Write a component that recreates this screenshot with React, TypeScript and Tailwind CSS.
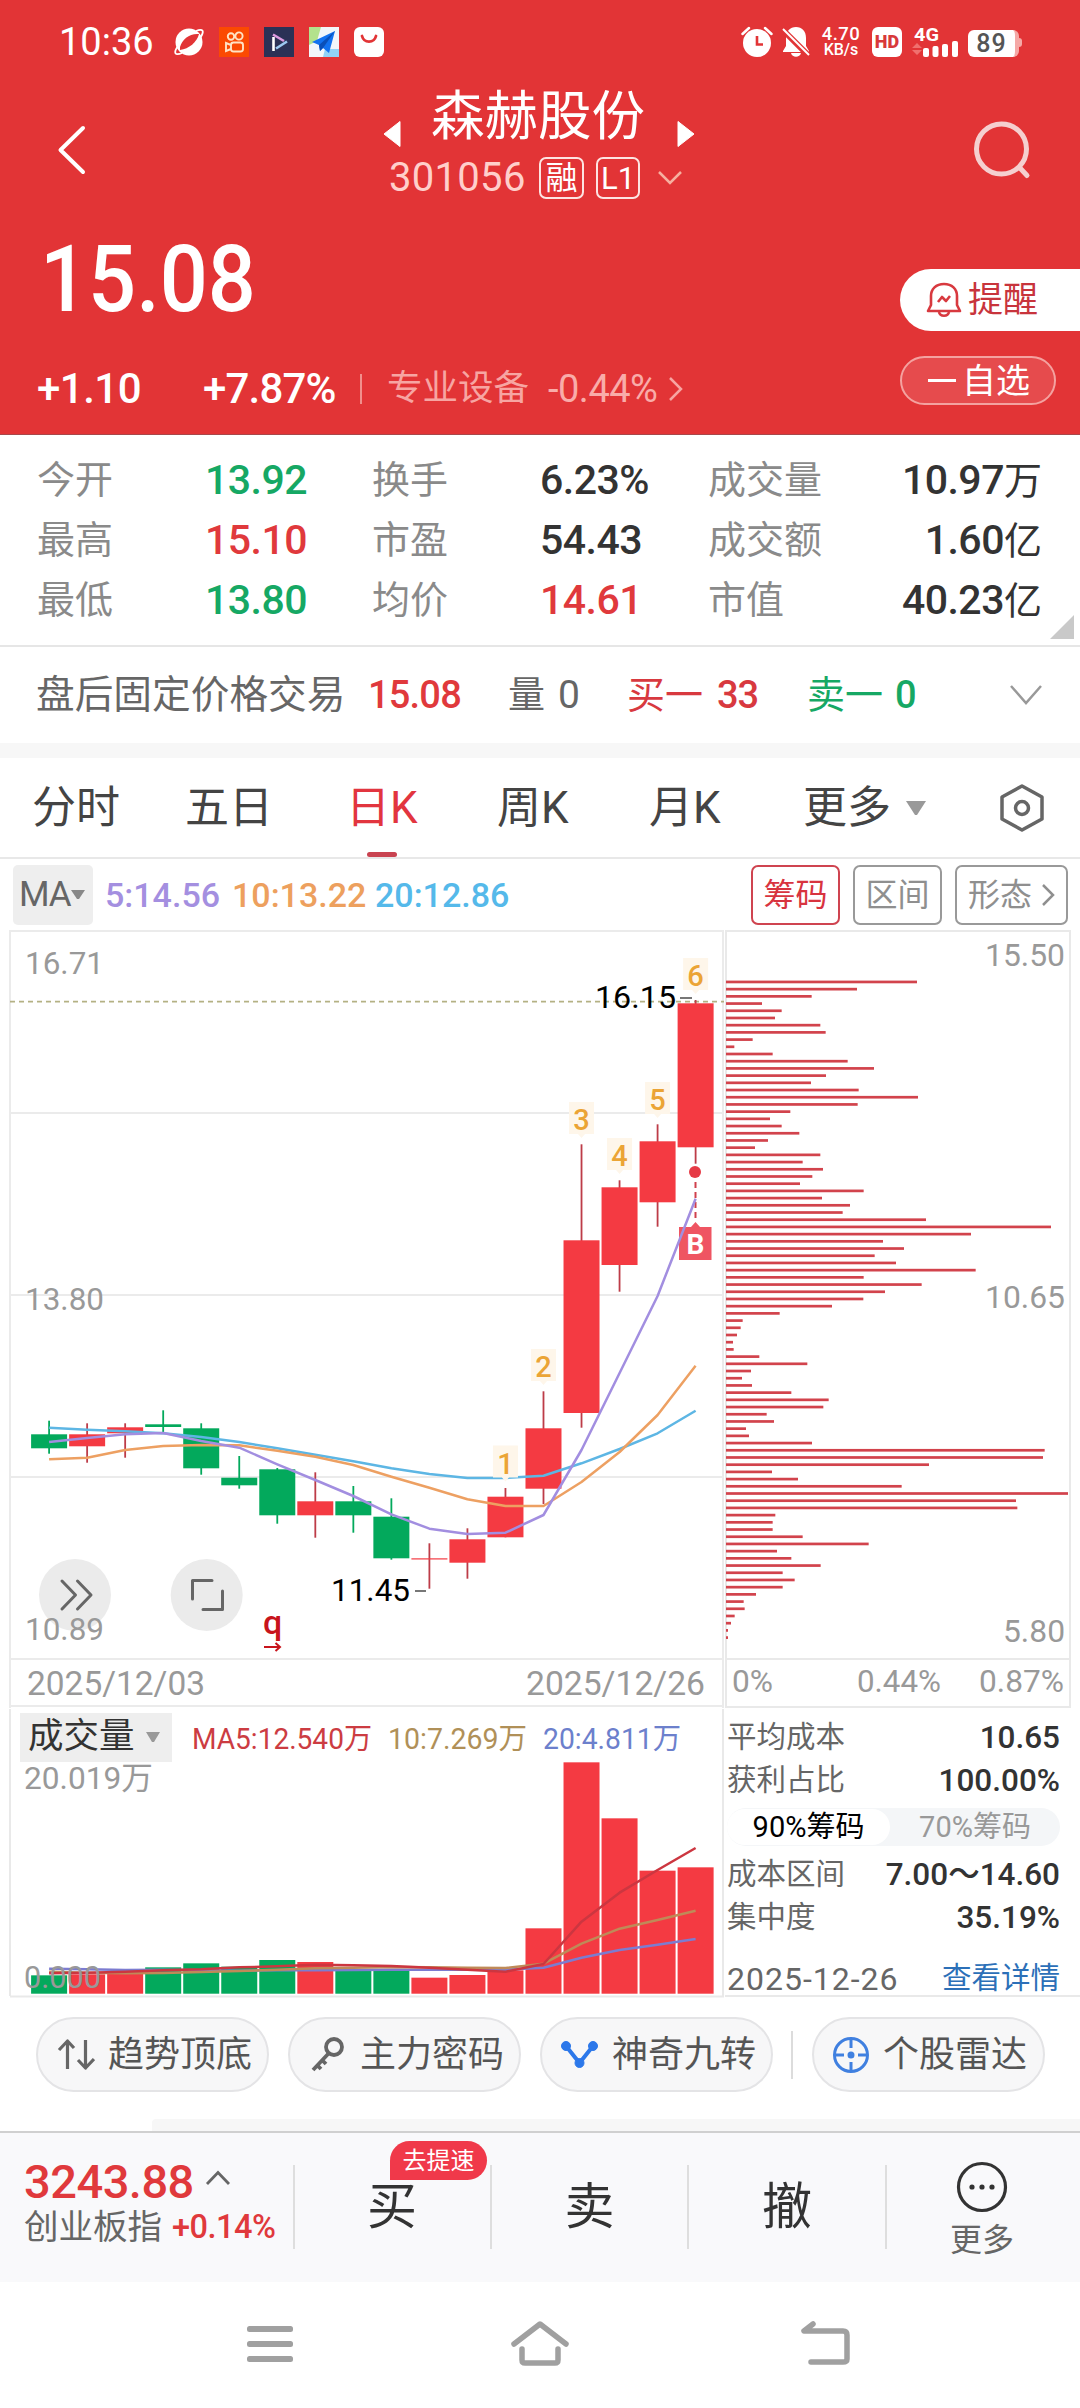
import React from "react";

const RED = "#f43a42";
const GREEN = "#03a95c";

type Candle = {
  up: boolean;
  top: number;
  bottom: number;
  high: number;
  low: number;
};

// Vertical positions are in chart units, 930 is the top edge of the panel
const candles: Candle[] = [
  { up: false, top: 1434.3, bottom: 1448.3, high: 1420.7, low: 1453.7 },
  { up: true, top: 1434.3, bottom: 1446.3, high: 1423.3, low: 1462.7 },
  { up: true, top: 1427.3, bottom: 1433.3, high: 1423.3, low: 1457.7 },
  { up: false, top: 1424.3, bottom: 1427, high: 1410.3, low: 1432.3 },
  { up: false, top: 1428.3, bottom: 1468.3, high: 1423.3, low: 1474.7 },
  { up: false, top: 1477.7, bottom: 1485.3, high: 1456, low: 1488.7 },
  { up: false, top: 1469.3, bottom: 1515.3, high: 1468, low: 1523.7 },
  { up: true, top: 1501.3, bottom: 1515.3, high: 1472.3, low: 1537.7 },
  { up: false, top: 1501.3, bottom: 1515.3, high: 1486, low: 1532.7 },
  { up: false, top: 1516.7, bottom: 1558.3, high: 1498.3, low: 1559.7 },
  { up: true, top: 1558.3, bottom: 1559.5, high: 1543.3, low: 1588.7 },
  { up: true, top: 1539.3, bottom: 1562.7, high: 1528.3, low: 1578.7 },
  { up: true, top: 1496.7, bottom: 1537.3, high: 1488, low: 1537.3 },
  { up: true, top: 1428.3, bottom: 1488.7, high: 1391.3, low: 1504 },
  { up: true, top: 1240.3, bottom: 1413, high: 1144.3, low: 1427.7 },
  { up: true, top: 1187.3, bottom: 1265, high: 1180.3, low: 1291.7 },
  { up: true, top: 1141.3, bottom: 1202.3, high: 1124.3, low: 1226.7 },
  { up: true, top: 1003.3, bottom: 1147.3, high: 1000, low: 1163.7 },
];

const ma5 = [1442, 1438, 1434.3, 1433, 1441, 1447.7, 1464.3, 1480, 1496, 1514.3, 1528.7, 1534, 1532.7, 1515, 1450, 1373, 1296, 1198.7];
const ma10 = [1459.3, 1457.7, 1450, 1446, 1445, 1445.3, 1450.7, 1456.7, 1465, 1476.7, 1487.7, 1499.3, 1506, 1506, 1482, 1452, 1415, 1365.7];
const ma20 = [1427.7, 1429.7, 1431.3, 1433.3, 1437, 1442, 1448.3, 1454.7, 1461.3, 1468.3, 1474, 1478, 1478, 1475.7, 1463.3, 1449, 1433.3, 1410.7];

const volumes = [823, 820, 818, 799, 787, 797, 777, 783, 808, 808, 830, 822, 808, 682, 184, 352, 509, 499];
const vol5 = [817, 815, 812, 808, 805, 799, 796, 791, 793, 795, 800, 806, 812, 789, 662, 575, 507, 441];
const vol10 = [812, 815, 817, 816, 813, 810, 806, 802, 800, 798, 799, 800, 801, 788, 728, 683, 657, 629];
const vol20 = [803, 805, 807, 806, 808, 809, 808, 808, 807, 806, 806, 806, 806, 800, 770, 747, 731, 714];

const chips = [
  621, 441, 305, 156, 215, 195, 331, 347, 128, 73, 188, 413, 492, 348, 303, 446, 624, 443, 241, 180, 215, 268, 174,
  135, 331, 278, 339, 307, 270, 461, 336, 420, 398, 648, 1023, 783, 519, 582, 494, 558, 797, 461, 635, 525, 460, 366,
  209, 98, 92, 81, 69, 71, 148, 292, 123, 96, 126, 244, 356, 340, 170, 192, 108, 117, 306, 1004, 999, 657, 186, 264,
  575, 1074, 918, 922, 196, 188, 188, 278, 476, 201, 244, 332, 218, 254, 218, 138, 101, 104, 74, 63, 54, 54,
];

const marks = [
  { n: "1", i: 12, y: 1473.5 },
  { n: "2", i: 13, y: 1377 },
  { n: "3", i: 14, y: 1130 },
  { n: "4", i: 15, y: 1166 },
  { n: "5", i: 16, y: 1110 },
  { n: "6", i: 17, y: 986 },
];

const cx = (i: number) => 49.1 + i * 38.03;
const line = (ys: number[]) => ys.map((y, i) => `${cx(i).toFixed(1)},${y}`).join(" ");

type LabelProps = {
  x: number;
  y: number;
  w: number;
  size?: number;
  fill?: string;
  weight?: number;
  children: string;
};

const Label: React.FC<LabelProps> = ({ x, y, w, size = 32, fill = "#999", weight = 400, children }) => (
  <text x={x} y={y} textLength={w} lengthAdjust="spacingAndGlyphs" fontSize={size} fill={fill} fontWeight={weight}>
    {children}
  </text>
);

const StatusBar: React.FC = () => (
  <div className="flex h-[84px] items-center pl-[59px] pr-[58px] text-white">
    <span className="w-[115px] text-[38px] leading-none">10:36</span>
    <div className="flex gap-[15px]">
      <svg width="30" height="30" viewBox="0 0 30 30">
        <circle cx="15" cy="15" r="13.500" fill="#fff" />
        <path d="M6 20 C8 12 16 6 25 7 C23 15 15 22 6 23Z" fill="#e23436" />
        <path d="M22 4 C29 1 31 4 26 11 M8 26 C1 29 -1 26 4 19" fill="none" stroke="#fff" strokeWidth="1.800" />
      </svg>
      <svg width="30" height="30" viewBox="0 0 30 30" fill="none" stroke="#ffe3c4" strokeWidth="1.900">
        <rect width="30" height="30" fill="#fb4a02" stroke="none" />
        <circle cx="12" cy="9.500" r="3.200" />
        <circle cx="20" cy="9" r="3.600" />
        <rect x="12" y="15.500" width="12" height="9" rx="2.500" />
        <path d="M12 18 L7 16 V24 L12 22" />
      </svg>
      <svg width="30" height="30" viewBox="0 0 30 30" fill="none" strokeWidth="2.600">
        <rect width="30" height="30" fill="#2b3156" />
        <path d="M9.500 10 V24" stroke="#fff" />
        <path d="M9 7.500 L20 14" stroke="#dd9be0" />
        <path d="M23 14.500 L12 21.500" stroke="#9cc9f2" />
      </svg>
      <svg width="30" height="30" viewBox="0 0 30 30">
        <rect width="30" height="30" fill="#f2f6fa" />
        <path d="M0 0H12L8 14L0 18Z" fill="#b3e28c" />
        <path d="M16 22H30V30H14Z" fill="#92d2f7" />
        <path d="M26 4 L3 15 L10 18 L11 24 L14 21 L20 26Z" fill="#1272f0" />
        <path d="M26 4 L10 18 L11 24 L14 21Z" fill="#0a4fb8" />
      </svg>
      <svg width="30" height="30" viewBox="0 0 30 30">
        <rect width="30" height="30" rx="6" fill="#fff" />
        <path d="M8 9 C10 16.500 20 16.500 22 9" fill="none" stroke="#e23436" strokeWidth="2.800" strokeLinecap="round" />
      </svg>
    </div>
    <div className="ml-auto flex items-center">
      <svg width="32" height="32" viewBox="0 0 32 32" fill="none">
        <circle cx="16" cy="17" r="14" fill="#fff" />
        <path d="M16 10 V18.500 H22" stroke="#e23436" strokeWidth="2.600" />
        <path d="M1.500 8 L8 2 M30.500 8 L24 2" stroke="#fff" strokeWidth="2.500" strokeLinecap="round" />
      </svg>
      <svg className="ml-[9px]" width="28" height="32" viewBox="0 0 28 32">
        <path d="M14 1 C20 1 24 5 24 12 V20 L27 25 V26 H1 V25 L4 20 V12 C4 5 8 1 14 1Z M9 27 H19 C18 32 10 32 9 27Z" fill="#fff" />
        <path d="M0 3 L27 30" stroke="#e23436" strokeWidth="6" />
        <path d="M1 3 L27 29" stroke="#fff" strokeWidth="2" />
      </svg>
      <div className="ml-[11px] flex w-[40px] flex-col items-center font-medium leading-[16px]">
        <span className="text-[18.500px] tracking-[0.500px]">4.70</span>
        <span className="text-[16px]">KB/s</span>
      </div>
      <div className="ml-[11px] flex h-[30px] w-[30px] items-center justify-center rounded-[6px] bg-white text-[18px] font-black leading-none text-[#d8393b]">
        HD
      </div>
      <svg className="ml-[10px] overflow-visible" width="47" height="32" viewBox="0 0 47 32" fill="#fff">
        <text x="2" y="15" textLength="25" lengthAdjust="spacingAndGlyphs" fontSize="19" fontWeight="700">4G</text>
        <path d="M0 22 L5 17 L10 22Z M0 24 L5 29 L10 24Z" fill="#f0706e" />
        <rect x="11" y="22" width="6" height="9" rx="2" />
        <rect x="20.500" y="20" width="6" height="11" rx="2" />
        <rect x="30" y="18" width="6" height="13" rx="2" />
        <rect x="40" y="15" width="6" height="16" rx="2" />
      </svg>
      <div className="ml-[9px] mt-[3px] flex h-[27px] w-[51px] items-center justify-center rounded-[6px] border-r-[4px] border-[#f5a8a6] bg-white text-[25px] font-medium leading-none tracking-[1px] text-[#555]">
        89
      </div>
      <div className="h-[9px] w-[3px] rounded-r bg-[#f5a8a6]" />
    </div>
  </div>
);

const Header: React.FC = () => (
  <header className="flex h-[435px] flex-col border-b border-[#a8484a] bg-[#e23436]">
    <StatusBar />
    <div className="flex h-[130px] pl-[56px]">
      <svg className="mt-[40px]" width="34" height="52" viewBox="0 0 34 52" fill="none" stroke="#fff" strokeWidth="4" strokeLinecap="round" strokeLinejoin="round">
        <path d="M27 4 L4.500 26 L27 48" />
      </svg>
      <div className="ml-[293px] flex w-[320px] flex-col">
        <div className="flex h-[66px] items-center text-white">
          <svg className="mt-[33px]" width="18" height="28" viewBox="0 0 18 28" fill="#fff">
            <path d="M17 1.500 V26.500 L1 14Z" stroke="#fff" strokeLinejoin="round" />
          </svg>
          <span className="ml-[30px] w-[246px] whitespace-nowrap text-[53.500px] leading-none">森赫股份</span>
          <svg className="mt-[33px]" width="18" height="28" viewBox="0 0 18 28" fill="#fff">
            <path d="M1 1.500 V26.500 L17 14Z" stroke="#fff" strokeLinejoin="round" />
          </svg>
        </div>
        <div className="mt-[6px] flex h-[44px] items-center pl-[6px]">
          <span className="w-[150px] text-[40px] leading-none tracking-[0.300px] text-[#ffcfcb]">301056</span>
          <span className="flex h-[42px] w-[45px] items-center justify-center rounded-[7px] border-2 border-[#fde4e2] text-[32px] leading-none text-white">融</span>
          <span className="ml-[12px] flex h-[42px] w-[44px] items-center justify-center rounded-[7px] border-2 border-[#fde4e2] text-[31px] leading-none text-white">L1</span>
          <svg className="ml-[17px]" width="26" height="16" viewBox="0 0 26 16" fill="none" stroke="#f6b0a0" strokeWidth="2.500">
            <path d="M2 2 L13 13 L24 2" />
          </svg>
        </div>
      </div>
      <svg className="ml-[271px] mt-[36px]" width="60" height="62" viewBox="0 0 60 62" fill="none" stroke="#f5cfcf" strokeWidth="5" strokeLinecap="round">
        <circle cx="27.500" cy="29" r="25" />
        <path d="M46 48 L53 55.500" />
      </svg>
    </div>
    <div className="flex flex-1">
      <div className="flex w-[900px] flex-col">
        <div className="h-[93px] pl-[40px] pt-[20px] text-[92px] font-medium leading-none text-white">
          <span className="inline-block origin-left scale-x-[0.92]">15.08</span>
        </div>
        <div className="mt-[50px] flex h-[64px] items-center pl-[37px] text-[42px] font-medium leading-none tracking-[-0.500px] text-white">
          <span className="w-[166px]">+1.10</span>
          <span className="w-[157px] tracking-[-0.800px]">+7.87%</span>
          <span className="h-[30px] w-[2px] bg-[#f18f8c]" />
          <span className="ml-[25px] w-[161px] text-[35.500px] font-normal tracking-normal text-[#f7a5a2]">专业设备</span>
          <span className="w-[120px] text-[38px] font-normal text-[#f9aca9]">-0.44%</span>
          <svg width="16" height="26" viewBox="0 0 16 26" fill="none" stroke="#f7a5a2" strokeWidth="2.500">
            <path d="M2 2 L13 13 L2 24" />
          </svg>
        </div>
      </div>
      <div className="flex flex-1 flex-col pt-[55px]">
        <div className="flex h-[62px] items-center rounded-l-full bg-white pl-[26px] text-[35px] leading-none text-[#c8343c]">
          <svg className="mr-[6px]" width="36" height="38" viewBox="0 0 36 38" fill="none" stroke="#d8393f" strokeWidth="2.600" strokeLinejoin="round">
            <path d="M18 3 C26 3 31 8 31 15 V24 L34 30 H2 L5 24 V15 C5 8 10 3 18 3Z" />
            <path d="M13 31 C14 36 22 36 23 31" />
            <path d="M12 21 L16 16 L20 20 L24 15" />
          </svg>
          提醒
        </div>
        <div className="mt-[25px] flex h-[49px] w-[156px] items-center rounded-full border-2 border-[#f4a2a0] bg-[#e64b4d] pl-[26px] text-[34px] leading-none text-white">
          <span className="mr-[6px] h-[3px] w-[28px] bg-white" />
          自选
        </div>
      </div>
    </div>
  </header>
);

const stats = [
  ["今开", "13.92", "text-[#16a864]", "换手", "6.23%", "text-[#333]", "成交量", "10.97", "万"],
  ["最高", "15.10", "text-[#e0393c]", "市盈", "54.43", "text-[#333]", "成交额", "1.60", "亿"],
  ["最低", "13.80", "text-[#16a864]", "均价", "14.61", "text-[#e0393c]", "市值", "40.23", "亿"],
];

const Stats: React.FC = () => (
  <section className="relative h-[212px] border-b-2 border-[#e6e6e6] pt-[15px]">
    {stats.map(([a, av, ac, b, bv, bc, c, cv, unit]) => (
      <div key={a} className="flex h-[60px] items-center pl-[37px] pr-[38px] text-[38px] leading-none text-[#8a8a8a]">
        <span className="w-[168px]">{a}</span>
        <span className={`w-[167px] text-[41px] font-medium tracking-[-0.5px] ${ac}`}>{av}</span>
        <span className="w-[168px]">{b}</span>
        <span className={`w-[168px] text-[41px] font-medium tracking-[-0.5px] ${bc}`}>{bv}</span>
        <span>{c}</span>
        <span className="ml-auto text-[#333]">
          <span className="text-[41px] font-medium tracking-[-0.5px]">{cv}</span>
          {unit}
        </span>
      </div>
    ))}
    <svg className="absolute bottom-[6px] right-[6px]" width="24" height="24" viewBox="0 0 24 24">
      <path d="M24 0 V24 H0Z" fill="#c9c9c9" />
    </svg>
  </section>
);

const AfterHours: React.FC = () => (
  <section className="flex h-[96px] items-center pl-[36px] text-[38.700px] leading-none text-[#666]">
    <span className="w-[332px]">盘后固定价格交易</span>
    <span className="w-[140px] text-[38px] font-medium tracking-[-0.800px] text-[#e0393c]">15.08</span>
    <span className="w-[50px] text-[37px]">量</span>
    <span className="w-[69px] text-[39px]">0</span>
    <span className="w-[90px] text-[38px] text-[#d8393f]">买一</span>
    <span className="w-[90px] text-[38px] font-medium tracking-[-1px] text-[#d8393f]">33</span>
    <span className="w-[88px] text-[38px] text-[#16a864]">卖一</span>
    <span className="w-[114px] text-[38px] font-medium text-[#16a864]">0</span>
    <svg width="34" height="22" viewBox="0 0 34 22" fill="none" stroke="#999" strokeWidth="2.500">
      <path d="M2 2 L17 19 L32 2" />
    </svg>
  </section>
);

const Tabs: React.FC = () => (
  <nav className="flex h-[101px] items-center border-b-2 border-[#e8e8e8] pl-[32px] text-[44px] leading-none text-[#444]">
    <span className="w-[153px]">分时</span>
    <span className="w-[161px]">五日</span>
    <span className="relative w-[151px] text-[#e2353f]">
      日K
      <span className="absolute left-[21px] top-[66px] h-[5px] w-[30px] rounded-sm bg-[#c94350]" />
    </span>
    <span className="w-[152px]">周K</span>
    <span className="w-[154px]">月K</span>
    <span className="w-[103px]">更多</span>
    <svg width="20" height="14" viewBox="0 0 20 14">
      <path d="M0 0 H20 L11 14 H9Z" fill="#999" />
    </svg>
    <svg className="ml-[72px]" width="48" height="50" viewBox="0 0 48 50" fill="none" stroke="#666" strokeWidth="3.500" strokeLinejoin="round">
      <path d="M24 3 L44 14 V36 L24 47 L4 36 V14Z" />
      <circle cx="24" cy="25" r="6.500" />
    </svg>
  </nav>
);

const MaRow: React.FC = () => (
  <div className="flex h-[71px] items-center pl-[13px] pr-[12px] text-[34px] font-medium leading-none">
    <div className="flex h-[60px] w-[80px] items-center rounded-[5px] bg-[#eee] pl-[6px] font-normal text-[#666]">
      <span className="w-[52px] text-[35px] tracking-[-1px]">MA</span>
      <svg width="14" height="9" viewBox="0 0 14 9">
        <path d="M0 0 H14 L8 9 H6Z" fill="#888" />
      </svg>
    </div>
    <span className="ml-[12px] w-[127px] text-[#a48fe0]">5:14.56</span>
    <span className="w-[143px] text-[#eda05e]">10:13.22</span>
    <span className="text-[#55b9ea]">20:12.86</span>
    <div className="ml-auto flex gap-[13px] text-[32px] font-normal text-[#8f8f8f]">
      <span className="flex h-[60px] w-[89px] items-center justify-center rounded-[7px] border-2 border-[#cf4450] text-[#d8343f]">筹码</span>
      <span className="flex h-[60px] w-[89px] items-center justify-center rounded-[7px] border-2 border-[#999]">区间</span>
      <span className="flex h-[60px] w-[113px] items-center rounded-[7px] border-2 border-[#999] pl-[11px]">
        形态
        <svg className="ml-[9px]" width="14" height="24" viewBox="0 0 14 24" fill="none" stroke="#8f8f8f" strokeWidth="2.500">
          <path d="M2 2 L12 12 L2 22" />
        </svg>
      </span>
    </div>
  </div>
);

const KLine: React.FC = () => (
  <svg width="725" height="778" viewBox="0 930 725 778" className="block">
    <g stroke="#ebebeb" strokeWidth="2">
      <path d="M10 931 H724 M10 1113 H724 M10 1295 H724 M10 1477 H724 M10 1659 H724 M10 1706 H724" />
      <path d="M10 930 V1708 M723 930 V1708" />
    </g>
    <circle cx="75" cy="1595" r="36" fill="#ebebeb" />
    <circle cx="206.700" cy="1595" r="36" fill="#ebebeb" />
    <Label x={25} y={974} w={79}>16.71</Label>
    <Label x={25} y={1310} w={79}>13.80</Label>
    <Label x={25} y={1640} w={79}>10.89</Label>
    <path d="M10 1001.700 H724" stroke="#b4b184" strokeWidth="1.800" strokeDasharray="5 4" />
    {candles.map((c, i) => (
      <g key={i} fill={c.up ? RED : GREEN}>
        <rect x={cx(i) - 0.9} y={c.high} width="1.800" height={c.low - c.high} fill={c.up ? "#bd3c48" : GREEN} />
        <rect x={cx(i) - 18} y={c.top} width="36" height={c.bottom - c.top} />
      </g>
    ))}
    <path d="M695.500 1182 V1222" stroke="#d0404c" strokeWidth="2" strokeDasharray="6 4" />
    <circle cx="695" cy="1172" r="6" fill="#e63a45" />
    <path d="M679 1227 H691 L695.500 1222 L700 1227 H711.500 V1260 H679Z" fill="#ef5562" />
    <g fill="none" strokeWidth="2.500" strokeLinejoin="round">
      <polyline points={line(ma20)} stroke="#5db6e4" />
      <polyline points={line(ma10)} stroke="#eda062" />
      <polyline points={line(ma5)} stroke="#a28ee0" />
    </g>
    <text x="695.500" y="1254" fontSize="28" fontWeight="700" fill="#fff" textAnchor="middle">B</text>
    {marks.map((m) => (
      <g key={m.n}>
        <path
          d={`M${cx(m.i) - 12.5} ${m.y - 28} h25 v32 h-9 l-3.500 4 l-3.500 -4 h-9z`}
          fill="#fef6ea"
        />
        <text x={cx(m.i)} y={m.y} fontSize="29" fontWeight="500" fill="#eba435" textAnchor="middle">{m.n}</text>
      </g>
    ))}
    <Label x={595} y={1008} w={81} fill="#000">16.15</Label>
    <path d="M680 998 H692 M415 1591 H426" stroke="#777" strokeWidth="1.800" />
    <Label x={331} y={1600.7} w={79} fill="#000">11.45</Label>
    <g fill="none" stroke="#666" strokeWidth="3" strokeLinecap="round" strokeLinejoin="round">
      <path d="M62 1581 L75.500 1595 L62 1609 M77.500 1581 L91 1595 L77.500 1609" />
      <path d="M212 1580.500 H192.500 V1599 M222.500 1591 V1609.500 H203" />
    </g>
    <text x="272.500" y="1634" fontSize="34" fontWeight="500" fill="#c8141c" textAnchor="middle">q</text>
    <path d="M264 1647 H280 M275.500 1643 L280 1647 L275.500 1651" stroke="#c8141c" strokeWidth="2" fill="none" />
    <Label x={27} y={1695} w={178} size={33}>2025/12/03</Label>
    <Label x={526} y={1695} w={179} size={33}>2025/12/26</Label>
  </svg>
);

const ChipChart: React.FC = () => (
  <svg width="355" height="778" viewBox="725 930 355 778" className="block">
    <path d="M725 931 H1070 V1707 H725 M726 1659 H1070 M726 931 V1707" fill="none" stroke="#e9e9e9" strokeWidth="2" />
    {chips.map((v, i) => (
      <rect key={i} x="726" y={980.6 + i * 7.205} width={(v - 48) / 3} height="2.700" fill="#d2434c" />
    ))}
    <Label x={985} y={966} w={80}>15.50</Label>
    <Label x={985} y={1308} w={80}>10.65</Label>
    <Label x={1003} y={1642} w={62}>5.80</Label>
    <Label x={732} y={1692} w={41}>0%</Label>
    <Label x={857} y={1692} w={84}>0.44%</Label>
    <Label x={979} y={1692} w={85}>0.87%</Label>
  </svg>
);

const Volume: React.FC = () => (
  <div className="flex h-[290px] w-[725px] flex-col">
    <div className="flex h-[58px] items-center pl-[20px]">
      <div className="flex h-[49px] w-[152px] items-center bg-[#eee] pl-[8px] text-[35.500px] leading-none text-[#333]">
        <span className="w-[118px]">成交量</span>
        <svg width="14" height="10" viewBox="0 0 14 10">
          <path d="M0 0 H14 L8 10 H6Z" fill="#999" />
        </svg>
      </div>
      <svg width="540" height="49" viewBox="172 1712 540 49">
        <Label x={192} y={1748} w={180} size={29} fill="#cc3c42">MA5:12.540万</Label>
        <Label x={388} y={1748} w={139} size={29} fill="#b09058">10:7.269万</Label>
        <Label x={543} y={1748} w={138} size={29} fill="#6c80cc">20:4.811万</Label>
      </svg>
    </div>
    <svg width="725" height="232" viewBox="0 1765 725 232" className="block overflow-visible">
      <path d="M10 1708 V1995 M723 1708 V1995 M10 1995.500 H724" stroke="#e9e9e9" strokeWidth="2" />
      <Label x={24} y={1788} w={129}>20.019万</Label>
      {volumes.map((v, i) => (
        <rect key={i} x={cx(i) - 18} y={1700 + v / 3} width="36" height={292.7 - v / 3} fill={candles[i].up ? RED : GREEN} />
      ))}
      <g fill="none" strokeWidth="2.500" strokeLinejoin="round">
        <polyline points={line(vol20.map((v) => 1700 + v / 3))} stroke="#7c7cd0" />
        <polyline points={line(vol10.map((v) => 1700 + v / 3))} stroke="#bf8a58" />
        <polyline points={line(vol5.map((v) => 1700 + v / 3))} stroke="#cc3640" />
      </g>
      <Label x={24} y={1987} w={77}>0.000</Label>
    </svg>
  </div>
);

const InfoRow: React.FC<{ name: string; value: string }> = ({ name, value }) => (
  <div className="flex h-[43px] shrink-0 items-center justify-between text-[#333]">
    <span className="text-[29.500px] text-[#666]">{name}</span>
    <span className="text-[31.500px] font-medium">{value}</span>
  </div>
);

const ChipInfo: React.FC = () => (
  <div className="flex h-[289px] w-[355px] flex-col border-b-2 border-[#e9e9e9] pl-[2px] pr-[20px] pt-[8px] leading-none">
    <InfoRow name="平均成本" value="10.65" />
    <InfoRow name="获利占比" value="100.00%" />
    <div className="mb-[7px] mt-[6px] flex h-[38px] shrink-0 items-center rounded-full bg-[#f4f6f8] text-[29px]">
      <span className="flex h-[36px] w-[163px] items-center justify-center rounded-full bg-white text-black">90%筹码</span>
      <span className="flex-1 text-center text-[#999]">70%筹码</span>
    </div>
    <InfoRow name="成本区间" value="7.00～14.60" />
    <InfoRow name="集中度" value="35.19%" />
    <div className="mt-[18px] flex h-[43px] shrink-0 items-center justify-between text-[32px] text-[#666]">
      <span className="tracking-[1px]">2025-12-26</span>
      <span className="text-[29.500px] text-[#2c70b8]">查看详情</span>
    </div>
  </div>
);

const pill = "flex h-[75px] w-[233px] items-center rounded-full border-2 border-[#e4e4e6] bg-[#f7f7f8] text-[36px] leading-none text-[#555]";

const Tools: React.FC = () => (
  <div className="flex h-[121px] items-center pb-[8px] pl-[36px]">
    <div className={`${pill} pl-[19px]`}>
      <svg className="mr-[13px]" width="38" height="34" viewBox="0 0 38 34" fill="none" stroke="#666" strokeWidth="3.200" strokeLinejoin="round">
        <path d="M10.500 31 V4 M2 12 L10.500 3 L17 10 M28.500 2 V30 M21 22 L28.500 30 L37 21" />
      </svg>
      趋势顶底
    </div>
    <div className={`${pill} ml-[19px] pl-[20px]`}>
      <svg className="mr-[14px]" width="36" height="36" viewBox="0 0 36 36" fill="none" stroke="#666" strokeWidth="3.800">
        <circle cx="24" cy="10" r="8" />
        <path d="M19 16 L3 33 M7 28 L11 32 M12 23 L16 27" />
      </svg>
      主力密码
    </div>
    <div className={`${pill} ml-[19px] pl-[19px]`}>
      <svg className="mr-[14px]" width="37" height="28" viewBox="0 0 37 28" fill="#2c78ea" stroke="#2c78ea">
        <path d="M5 5 L18.500 22 L32 5" fill="none" strokeWidth="4" />
        <circle cx="5" cy="5" r="4.500" />
        <circle cx="32" cy="5" r="4.500" />
        <circle cx="18.500" cy="22" r="4.500" />
      </svg>
      神奇九转
    </div>
    <span className="ml-[18px] h-[48px] w-[2px] bg-[#dcdcdc]" />
    <div className={`${pill} ml-[19px] pl-[18px]`}>
      <svg className="mr-[13px]" width="38" height="38" viewBox="0 0 38 38" fill="none" stroke="#4080e0" strokeWidth="3">
        <circle cx="19" cy="19" r="16.500" />
        <path d="M19 2 V12 M19 26 V36 M2 19 H12 M26 19 H36" />
        <circle cx="19" cy="19" r="2" fill="#4080e0" />
      </svg>
      个股雷达
    </div>
  </div>
);

const TradeBar: React.FC = () => (
  <footer className="flex h-[151px] border-t-2 border-[#d0d0d0] bg-[#f9f9fb] leading-none">
    <div className="flex w-[293px] flex-col pl-[24px] pt-[25px]">
      <div className="flex items-center text-[47px] font-medium tracking-[-0.500px] text-[#e0393c]">
        3243.88
        <svg className="mb-[8px] ml-[11px]" width="26" height="16" viewBox="0 0 26 16" fill="none" stroke="#666" strokeWidth="2.800">
          <path d="M2 14 L13 2.500 L24 14" />
        </svg>
      </div>
      <div className="mt-[5px] flex items-center text-[34.500px] text-[#666]">
        创业板指
        <span className="ml-[10px] text-[32.500px] font-medium tracking-[-0.500px] text-[#e0393c]">+0.14%</span>
      </div>
    </div>
    <div className="mt-[32px] flex h-[84px] flex-1 text-[50px] text-[#333]">
      <div className="relative flex w-[197px] items-center justify-center border-l-2 border-[#dedede] pr-[1px]">
        买
        <span className="absolute left-[95px] top-[-24px] flex h-[39px] w-[97px] items-center justify-center rounded-[20px] rounded-bl-none bg-[#f0394a] text-[24px] text-white">
          去提速
        </span>
      </div>
      <div className="flex w-[197px] items-center justify-center border-l-2 border-[#dedede]">卖</div>
      <div className="flex w-[198px] items-center justify-center border-l-2 border-[#dedede]">撤</div>
      <div className="flex flex-1 flex-col items-center border-l-2 border-[#dedede] pr-[3px] text-[32px] text-[#666]">
        <svg className="mt-[-4px] shrink-0" width="52" height="52" viewBox="0 0 52 52" fill="none" stroke="#333" strokeWidth="3.200">
          <circle cx="26" cy="26" r="23.500" />
          <g fill="#333" stroke="none">
            <circle cx="16" cy="26" r="2.600" />
            <circle cx="26" cy="26" r="2.600" />
            <circle cx="36" cy="26" r="2.600" />
          </g>
        </svg>
        <span className="mt-[11px]">更多</span>
      </div>
    </div>
  </footer>
);

const NavBar: React.FC = () => (
  <div className="flex h-[126px] items-center pb-[2px] pl-[245px]">
    <svg width="50" height="44" viewBox="0 0 50 44" fill="#a0a0a0">
      <rect x="2" y="4" width="46" height="6" rx="2.500" />
      <rect x="2" y="19" width="46" height="6" rx="2.500" />
      <rect x="2" y="34" width="46" height="6" rx="2.500" />
    </svg>
    <svg className="ml-[214px]" width="62" height="48" viewBox="0 0 62 48" fill="none" stroke="#a0a0a0" strokeWidth="5.500" strokeLinecap="round" strokeLinejoin="round">
      <path d="M5 24 L31 4 L57 24" />
      <path d="M13 29 V40 Q13 43 16 43 H46 Q49 43 49 40 V29" />
    </svg>
    <svg className="ml-[226px]" width="56" height="48" viewBox="0 0 56 48" fill="none" stroke="#a0a0a0" strokeWidth="5.500" strokeLinecap="round" strokeLinejoin="round">
      <path d="M16 4 L7 11 H46 Q50 11 50 15 V39 Q50 42 46 42 H14" />
    </svg>
  </div>
);

export default function App() {
  return (
    <div className="flex h-[2408px] w-[1080px] flex-col overflow-hidden bg-white font-[Roboto,'Noto_Sans_CJK_SC',sans-serif]">
      <Header />
      <Stats />
      <AfterHours />
      <div className="h-[15px] bg-[#f7f7f7]" />
      <Tabs />
      <MaRow />
      <div className="flex">
        <KLine />
        <ChipChart />
      </div>
      <div className="flex">
        <Volume />
        <ChipInfo />
      </div>
      <Tools />
      <div className="ml-[152px] h-[12px] rounded-tl bg-[#f7f7f7]" />
      <TradeBar />
      <NavBar />
    </div>
  );
}
